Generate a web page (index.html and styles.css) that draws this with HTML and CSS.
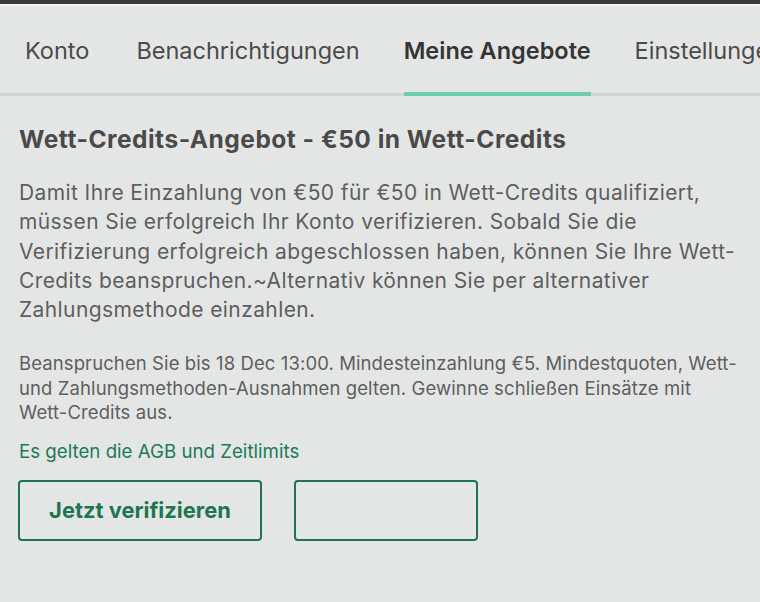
FILE: index.html
```html
<!DOCTYPE html>
<html lang="de">
<head>
<meta charset="utf-8">
<title>Meine Angebote</title>
<link rel="stylesheet" href="styles.css">
</head>
<body>
<div class="topbar"></div>
<nav class="tabs">
  <span class="tab">Konto</span>
  <span class="tab">Benachrichtigungen</span>
  <span class="tab active">Meine Angebote</span>
  <span class="tab">Einstellungen</span>
</nav>
<main class="offer">
  <h1 class="title">Wett-Credits-Angebot - €50 in Wett-Credits</h1>
  <p class="desc">Damit Ihre Einzahlung von €50 für €50 in Wett-Credits qualifiziert, müssen Sie erfolgreich Ihr Konto verifizieren. Sobald Sie die Verifizierung erfolgreich abgeschlossen haben, können Sie Ihre Wett-Credits beanspruchen.~Alternativ können Sie per alternativer Zahlungsmethode einzahlen.</p>
  <p class="terms">Beanspruchen Sie bis 18 Dec 13:00. Mindesteinzahlung €5. Mindestquoten, Wett- und Zahlungsmethoden-Ausnahmen gelten. Gewinne schließen Einsätze mit Wett-Credits aus.</p>
  <a class="link">Es gelten die AGB und Zeitlimits</a>
  <div class="actions">
    <button class="btn btn-primary">Jetzt verifizieren</button>
    <button class="btn btn-empty"></button>
  </div>
</main>
</body>
</html>
```
FILE: styles.css
```css
html, body {
  margin: 0;
  padding: 0;
}
body {
  background: #e4e6e5;
  font-family: Inter, "Noto Sans", sans-serif;
  width: 760px;
  height: 602px;
  overflow: hidden;
}
.topbar {
  height: 4px;
  background: #3a3a3a;
  border-bottom: 2px solid #f3f4f3;
}
.tabs {
  display: flex;
  gap: 44px;
  padding-left: 25px;
  height: 87px;
  border-bottom: 3px solid #d3d5d4;
  white-space: nowrap;
}
.tab {
  flex-shrink: 0;
  display: flex;
  align-items: center;
  font-size: 23.5px;
  color: #4a4a4a;
  padding-top: 2px;
  margin-bottom: -3px;
  border-bottom: 4px solid transparent;
  box-sizing: border-box;
  height: 90px;
}
.tab:first-child {
  margin-right: 3px;
}
.tab.active {
  font-weight: 600;
  color: #353535;
  border-bottom-color: #6ccfa8;
}
.offer {
  padding: 0 19px;
}
.title {
  margin: 28px 0 0;
  font-size: 24.5px;
  letter-spacing: 0.5px;
  font-weight: 700;
  color: #4a4a4a;
  line-height: 30px;
}
.desc {
  margin: 24px 0 0;
  font-size: 21px;
  letter-spacing: 0.4px;
  line-height: 29.3px;
  color: #5e5e5e;
}
.terms {
  margin: 27px 0 0;
  max-width: 722px;
  font-size: 18.5px;
  letter-spacing: 0.1px;
  line-height: 24.5px;
  color: #5e5e5e;
}
.link {
  display: block;
  margin-top: 15px;
  font-size: 18.7px;
  line-height: 24px;
  color: #1d7a55;
}
.actions {
  display: flex;
  gap: 32px;
  margin-top: 16px;
}
.btn {
  height: 61px;
  border: 2px solid #1d7352;
  border-radius: 4px;
  background: transparent;
  font-family: inherit;
  box-sizing: border-box;
}
.btn-primary {
  margin-left: -1px;
  width: 244px;
  font-size: 21.9px;
  font-weight: 700;
  color: #1e7553;
}
.btn-empty {
  width: 184px;
}
```
